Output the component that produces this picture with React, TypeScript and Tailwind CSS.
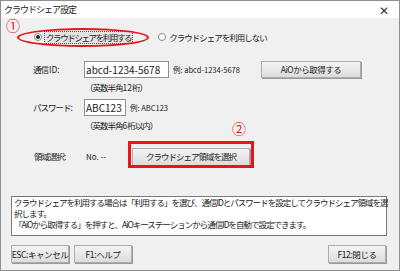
import React from "react";

const font = "font-['Noto_Sans_CJK_JP','Noto_Sans',sans-serif]";

function WinButton({ label, className }: { label: string; className: string }) {
  return (
    <div
      className={`flex items-center justify-center whitespace-nowrap border border-[#adadad] bg-gradient-to-b from-[#f4f4f4] to-[#dcdcdc] text-[#222] shadow-[1px_1px_0_#9a9a9a] ${className}`}
    >
      {label}
    </div>
  );
}

function Radio({ checked }: { checked?: boolean }) {
  return (
    <span className="flex h-[8px] w-[8px] items-center justify-center rounded-full border border-[#8a8a8a] bg-white">
      {checked && <span className="h-[4px] w-[4px] rounded-full bg-[#222]" />}
    </span>
  );
}

export default function App() {
  return (
    <div className={`relative h-[271px] w-[400px] overflow-hidden border border-[#8f8f8f] bg-[#f0f0f0] ${font} whitespace-nowrap text-[8.5px] tracking-[-1px] text-[#222]`}>
      {/* title bar */}
      <div className="flex h-[17px] items-center justify-between bg-white pl-[3px] pr-[10px]">
        <span className="text-[9px]">クラウドシェア設定</span>
        <span className="text-[12px] leading-none tracking-normal text-[#333]">✕</span>
      </div>

      {/* radios */}
      <div className="mt-[12px] flex h-[14px] items-center">
        <div className="ml-[33px] flex items-center gap-[2px]">
          <Radio checked />
          <span className="border border-dotted border-[#555] bg-[#e3e3e3] px-[1px] leading-[11px] tracking-[-1.4px]">クラウドシェアを利用する</span>
        </div>
        <div className="ml-[25px] flex items-center gap-[3px]">
          <Radio />
          <span>クラウドシェアを利用しない</span>
        </div>
      </div>

      {/* 通信ID */}
      <div className="mt-[17px] flex h-[17px] items-center">
        <span className="ml-[32px] w-[51px]">
          通信 <span className="tracking-normal">ID:</span>
        </span>
        <div className="flex h-[17px] w-[85px] items-center border border-[#8f8f8f] bg-white pl-[1px] text-[10px] tracking-normal">abcd-1234-5678</div>
        <span className="ml-[4px] w-[88px] text-[7.5px] tracking-normal">例: abcd-1234-5678</span>
        <WinButton label="AiOから取得する" className="h-[17px] w-[100px] tracking-[-0.5px]" />
      </div>
      <div className="ml-[84px] mt-[3px] h-[12px] leading-[12px]">
        （英数半角<span className="tracking-normal">12</span>桁）
      </div>

      {/* パスワード */}
      <div className="mt-[6px] flex h-[17px] items-center">
        <span className="ml-[32px] w-[51px]">パスワード:</span>
        <div className="flex h-[17px] w-[42px] items-center border border-[#8f8f8f] bg-white pl-[1px] text-[10px] tracking-normal">ABC123</div>
        <span className="ml-[4px] text-[7.5px] tracking-normal">例: ABC123</span>
      </div>
      <div className="ml-[84px] mt-[3px] h-[12px] leading-[12px]">
        （英数半角<span className="tracking-normal">6</span>桁以内）
      </div>

      {/* 領域選択 */}
      <div className="mt-[16px] flex h-[19px] items-center">
        <span className="ml-[33px] w-[52px]">領域選択:</span>
        <span className="w-[46px] text-[8px] tracking-normal">No. --</span>
        <WinButton label="クラウドシェア領域を選択" className="h-[18px] w-[118px]" />
      </div>

      {/* info box */}
      <div className="ml-[10px] mt-[30px] h-[40px] w-[376px] border border-[#7a7a7a] bg-white px-[2px] leading-[11px]">
        <p>
          クラウドシェアを利用する場合は「利用する」を選び、通信IDとパスワードを設定してクラウドシェア領域を選
          <br />
          択します。
        </p>
        <p>「AiOから取得する」を押すと、AiOキーステーションから通信IDを自動で設定できます。</p>
      </div>

      {/* footer buttons */}
      <div className="mt-[9px] flex h-[18px] items-center px-[10px] tracking-[-0.4px]">
        <WinButton label="ESC:キャンセル" className="h-[18px] w-[58px]" />
        <WinButton label="F1:ヘルプ" className="ml-[5px] h-[18px] w-[58px]" />
        <WinButton label="F12:閉じる" className="ml-auto mr-[3px] h-[18px] w-[58px]" />
      </div>

      {/* annotations */}
      <span className="absolute left-[5px] top-[17px] text-[14px] leading-none tracking-normal text-[#e5161b]">①</span>
      <div className="absolute left-[16px] top-[27px] h-[19px] w-[132px] rounded-[50%] border-2 border-[#e5161b]" />
      <span className="absolute left-[231px] top-[120px] text-[14px] leading-none tracking-normal text-[#e5161b]">②</span>
      <div className="absolute left-[127px] top-[140px] h-[27px] w-[126px] border-[3px] border-[#e5161b]" />
    </div>
  );
}
